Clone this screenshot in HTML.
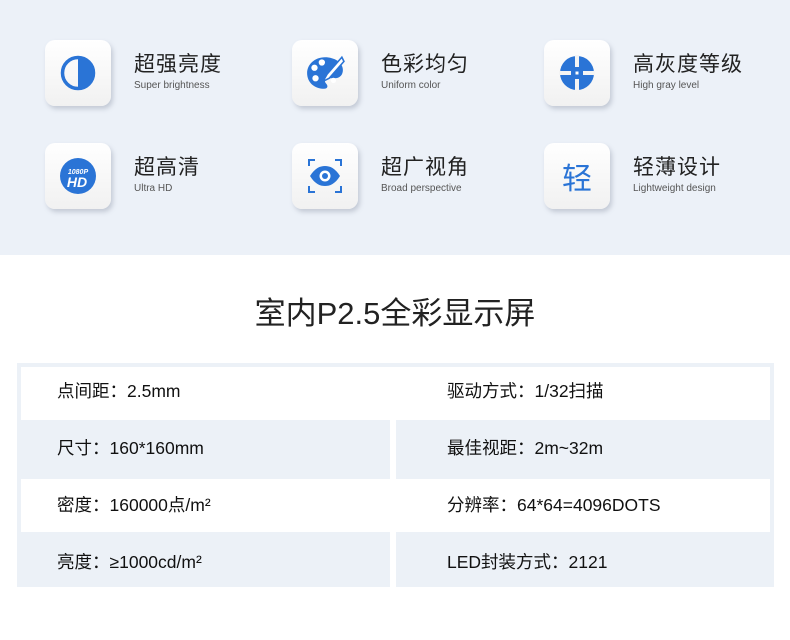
<!DOCTYPE html>
<html><head><meta charset="utf-8"><style>
*{margin:0;padding:0;box-sizing:border-box}
body{width:790px;height:640px;background:#fff;font-family:"Liberation Sans","Noto Sans CJK SC",sans-serif;position:relative;overflow:hidden}
.top{position:absolute;left:0;top:0;width:790px;height:255px;background:#ecf1f8}
.box{position:absolute;width:66px;height:66px;border-radius:10px;background:linear-gradient(#fff,#f1f1f1);box-shadow:2px 3px 5px rgba(120,130,150,.35);display:flex;align-items:center;justify-content:center}
.t{position:absolute;font-size:21px;color:#222;line-height:1;letter-spacing:1px}
.s{position:absolute;font-size:10px;color:#555;line-height:1}
h1{position:absolute;top:295px;left:0;width:790px;text-align:center;font-size:31px;font-weight:normal;color:#222;line-height:1.2}
.tb{position:absolute;left:17px;top:363px;width:757px;height:224px;background:#ecf1f7}
.w{position:absolute;background:#fff}
.g{position:absolute;width:6px;background:#fff}
.c{position:absolute;font-size:17.5px;color:#111;line-height:1}
</style></head><body>
<div class="top"></div>

<div class="box" style="left:45px;top:40px"><svg width="36" height="36" viewBox="0 0 36 36"><circle cx="18" cy="18" r="15.5" fill="none" stroke="#2a74d6" stroke-width="3.5"/><path d="M18 2.5A15.5 15.5 0 0 1 18 33.5Z" fill="#2a74d6"/></svg></div>
<div class="t" style="left:134px;top:54px">超强亮度</div><div class="s" style="left:134px;top:81px">Super brightness</div>

<div class="box" style="left:292px;top:40px"><svg width="40" height="40" viewBox="0 0 38 38"><path d="M19 4C9 4 2 11 2 19c0 9 7 15 16 15 4 0 4-3 2-5-2-2-1-5 2-5h6c5 0 8-3 8-8C36 9 28 4 19 4Z" fill="#2a74d6"/><circle cx="9" cy="14" r="3" fill="#fff"/><circle cx="16" cy="9" r="3" fill="#fff"/><circle cx="10" cy="24" r="3" fill="#fff"/><circle cx="27" cy="26" r="2.5" fill="#fff"/><path d="M35 4L21 20l-4 7 6-3 14-16z" fill="#fff" stroke="#2a74d6" stroke-width="1.5"/></svg></div>
<div class="t" style="left:381px;top:54px">色彩均匀</div><div class="s" style="left:381px;top:81px">Uniform color</div>

<div class="box" style="left:544px;top:40px"><svg width="36" height="36" viewBox="0 0 36 36"><circle cx="18" cy="18" r="17" fill="#2a74d6"/><rect x="16" y="0" width="4" height="12" fill="#f4f4f4"/><rect x="16" y="24" width="4" height="12" fill="#f4f4f4"/><rect x="0" y="16" width="12" height="4" fill="#f4f4f4"/><rect x="24" y="16" width="12" height="4" fill="#f4f4f4"/><rect x="16.5" y="16.5" width="3" height="3" fill="#fff"/></svg></div>
<div class="t" style="left:633px;top:54px">高灰度等级</div><div class="s" style="left:633px;top:81px">High gray level</div>

<div class="box" style="left:45px;top:143px"><svg width="38" height="38" viewBox="0 0 38 38"><circle cx="19" cy="19" r="18" fill="#2a74d6"/><text x="19" y="17" text-anchor="middle" font-size="7" font-weight="bold" font-style="italic" fill="#fff" font-family="Liberation Sans">1080P</text><text x="18" y="30" text-anchor="middle" font-size="14" font-weight="bold" font-style="italic" fill="#fff" font-family="Liberation Sans">HD</text></svg></div>
<div class="t" style="left:134px;top:157px">超高清</div><div class="s" style="left:134px;top:184px">Ultra HD</div>

<div class="box" style="left:292px;top:143px"><svg width="36" height="36" viewBox="0 0 36 36"><path d="M2 8V2h6M28 2h6v6M34 28v6h-6M8 34H2v-6" fill="none" stroke="#2a74d6" stroke-width="2"/><path d="M3 18C8 10 13 8 18 8s10 2 15 10c-5 8-10 10-15 10S8 26 3 18Z" fill="#2a74d6"/><circle cx="18" cy="18" r="5.5" fill="#fff"/><circle cx="18" cy="18" r="3" fill="#2a74d6"/></svg></div>
<div class="t" style="left:381px;top:157px">超广视角</div><div class="s" style="left:381px;top:184px">Broad perspective</div>

<div class="box" style="left:544px;top:143px"><span style="font-size:30px;color:#2a74d6;font-family:'Noto Sans CJK SC',sans-serif">轻</span></div>
<div class="t" style="left:633px;top:157px">轻薄设计</div><div class="s" style="left:633px;top:184px">Lightweight design</div>

<h1>室内P2.5全彩显示屏</h1>

<div class="tb"></div>
<div class="w" style="left:21px;top:367px;width:749px;height:53px"></div>
<div class="w" style="left:21px;top:479px;width:749px;height:53px"></div>
<div class="g" style="left:390px;top:420px;height:59px"></div>
<div class="g" style="left:390px;top:532px;height:55px"></div>

<div class="c" style="left:57px;top:383px">点间距：2.5mm</div>
<div class="c" style="left:447px;top:383px">驱动方式：1/32扫描</div>
<div class="c" style="left:57px;top:440px">尺寸：160*160mm</div>
<div class="c" style="left:447px;top:440px">最佳视距：2m~32m</div>
<div class="c" style="left:57px;top:497px">密度：160000点/m²</div>
<div class="c" style="left:447px;top:497px">分辨率：64*64=4096DOTS</div>
<div class="c" style="left:57px;top:554px">亮度：≥1000cd/m²</div>
<div class="c" style="left:447px;top:554px">LED封装方式：2121</div>
</body></html>
